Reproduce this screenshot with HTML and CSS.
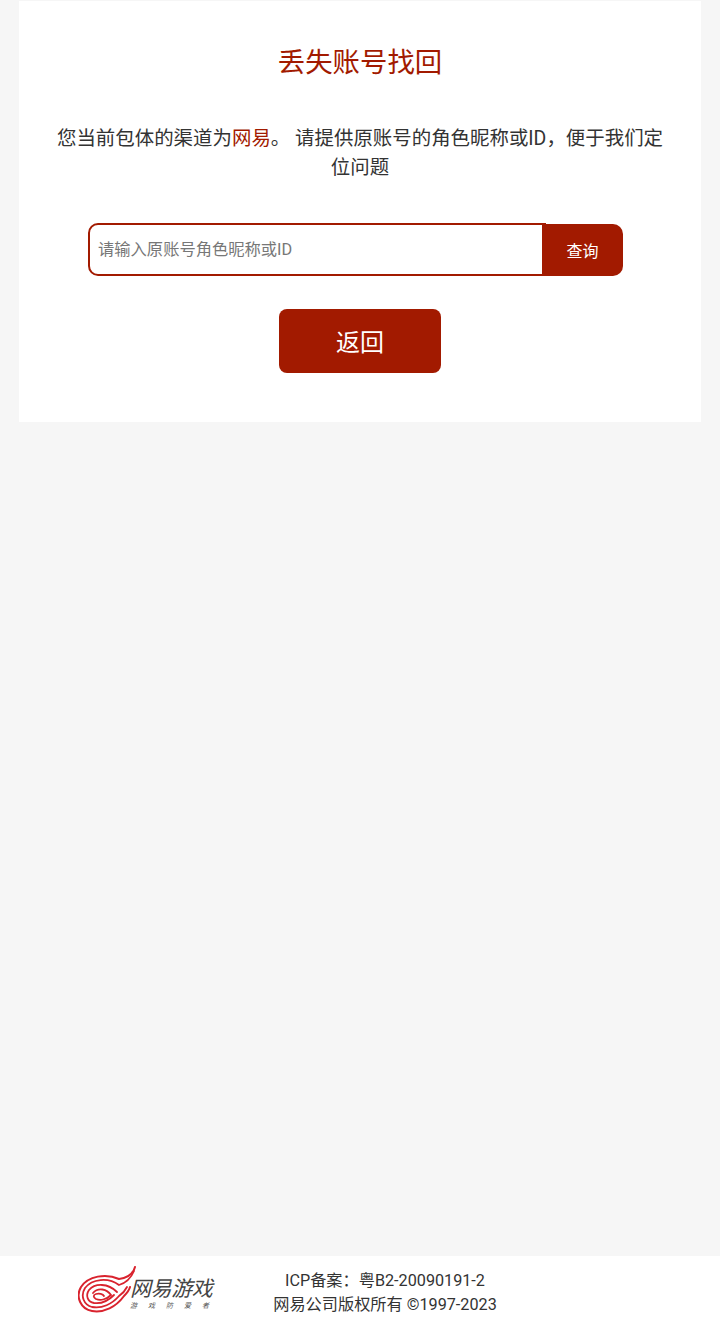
FILE: index.html
```html
<!DOCTYPE html>
<html lang="zh-CN">
<head>
    <meta charset="UTF-8">
    <meta name="viewport" content="width=device-width, initial-scale=1.0">
    <title>丢失账号找回</title>
    <link rel="stylesheet" href="styles.css">
</head>
<body>

    <div class="main">
        <div class="card">
            <h1>丢失账号找回</h1>
            <p class="desc">您当前包体的渠道为<span class="channel">网易</span>。 请提供原账号的角色昵称或ID，便于我们定位问题</p>
            <form class="search">
                <input type="text" placeholder="请输入原账号角色昵称或ID">
                <button type="button">查询</button>
            </form>
            <button type="button" class="back">返回</button>
        </div>
    </div>

    <div class="footer">
        <div class="logo">
            <svg class="logo-mark" width="60" height="48" viewBox="0 0 60 48" fill="none" stroke="#d9232e" stroke-linecap="round">
                <path d="M57 1C55 8 49 12 41 13C28 7 10 10 3 21C-3 31 3 43 14 45C26 47 38 41 46 30C49 27 51 25 52 21" stroke-width="2"/>
                <path d="M56 5C53 12 48 17 41 19C30 11 14 13 7 22C2 30 6 39 14 41C24 43 34 38 41 30C44 28 47 25 49 21" stroke-width="1.8"/>
                <path d="M39 26C30 17 17 17 11 24C7 30 10 36 16 37C23 38 30 35 36 29" stroke-width="1.8"/>
                <path d="M15 27C20 21 29 23 33 29C29 33 23 35 18 33C15 31 15 29 18 28C21 27 25 28 26 30" stroke-width="1.8"/>
            </svg>
            <div class="logo-text">
                <span class="logo-name">网易游戏</span>
                <span class="logo-sub">游戏防爱者</span>
            </div>
        </div>
        <div class="copyright">
            <p>ICP备案：粤B2-20090191-2</p>
            <p>网易公司版权所有 ©1997-2023</p>
        </div>
    </div>

</body>
</html>
```

FILE: styles.css
```css
body {
    font-family: Roboto, "Noto Sans CJK SC", sans-serif;
    background-color: #f6f6f6;
    color: #333;
    margin: 0;
    padding: 0;
    display: flex;
    flex-direction: column;
    height: 1326px;
}
.main {
    flex: 1;
    padding: 1px 19px 0;
}
.card {
    display: flex;
    flex-direction: column;
    align-items: center;
    background-color: white;
    height: 421px;
    box-sizing: border-box;
    padding-top: 44px;
}
.card h1 {
    color: #a21a00;
    font-size: 27.4px;
    font-weight: normal;
    line-height: 36px;
    margin: 0;
}
.desc {
    width: 620px;
    margin: 43px 0 0;
    font-size: 19.45px;
    line-height: 29px;
    text-align: center;
}
.channel {
    color: #a21a00;
}
.search {
    display: flex;
    align-items: flex-end;
    margin: 41px 9px 0 0;
}
.search input {
    box-sizing: border-box;
    width: 458px;
    height: 53px;
    padding: 0 8px;
    border: 2px solid #a21a00;
    border-radius: 10px 0 0 10px;
    background-color: white;
    font-family: inherit;
    font-size: 16.3px;
    outline: none;
}
.search input::placeholder {
    color: #777;
}
.search button {
    width: 81px;
    height: 52px;
    margin-left: -4px;
    border: none;
    border-radius: 0 10px 10px 0;
    background-color: #a21a00;
    color: white;
    font-family: inherit;
    font-size: 16px;
    padding: 0;
}
.back {
    width: 162px;
    height: 64px;
    margin-top: 33px;
    border: none;
    border-radius: 8px;
    background-color: #a21a00;
    color: white;
    font-family: inherit;
    font-size: 24px;
    padding: 0 0 2px;
}
.footer {
    display: flex;
    background-color: white;
    height: 70px;
}
.logo {
    display: flex;
    align-items: flex-start;
    margin-left: 78px;
    padding-top: 10px;
    width: 192px;
    box-sizing: border-box;
}
.logo-mark {
    flex-shrink: 0;
    margin-right: -8px;
}
.logo-text {
    display: flex;
    flex-direction: column;
    padding-top: 11px;
}
.logo-name {
    font-size: 21px;
    line-height: 24px;
    font-style: italic;
    color: #444;
    letter-spacing: -0.4px;
    white-space: nowrap;
}
.logo-sub {
    font-size: 7px;
    line-height: 10px;
    font-style: italic;
    color: #555;
    letter-spacing: 11px;
    white-space: nowrap;
}
.copyright {
    width: 230px;
    padding-top: 13px;
    text-align: center;
    font-size: 16.2px;
    line-height: 24px;
}
.copyright p {
    margin: 0;
    white-space: nowrap;
}
```
